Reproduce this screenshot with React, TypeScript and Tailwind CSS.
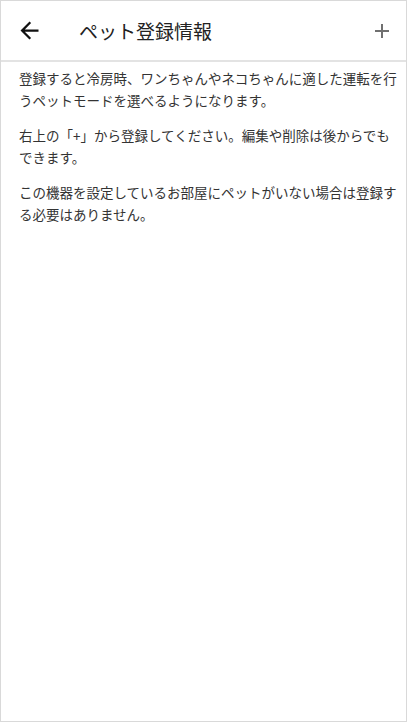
import React from "react";

export default function App() {
  const font = { fontFamily: '"Noto Sans CJK JP", "Noto Sans", sans-serif' };
  return (
    <div
      className="w-[407px] h-[722px] bg-white border border-[#d9d9d9] flex flex-col overflow-hidden"
      style={font}
    >
      <div className="h-[61px] shrink-0 flex items-center pl-[15px] pr-[12px] border-b-2 border-[#e3e3e3]">
        <svg width="27" height="27" viewBox="0 0 24 24" fill="#111111">
          <path d="M20 11H7.83l5.59-5.59L12 4l-8 8 8 8 1.41-1.41L7.83 13H20v-2z" />
        </svg>
        <div className="ml-[36px] text-[19px] text-[#222222] leading-none">ペット登録情報</div>
        <div className="flex-1" />
        <svg width="24" height="24" viewBox="0 0 24 24" fill="#707070">
          <path d="M19 13h-6v6h-2v-6H5v-2h6V5h2v6h6v2z" />
        </svg>
      </div>
      <div className="pl-[18px] pr-[10px] pt-[5px] text-[13.5px] leading-[22px] text-[#333333] flex flex-col gap-[13px] whitespace-nowrap">
        <p>
          登録すると冷房時、ワンちゃんやネコちゃんに適した運転を行
          <br />
          うペットモードを選べるようになります。
        </p>
        <p>
          右上の「+」から登録してください。編集や削除は後からでも
          <br />
          できます。
        </p>
        <p>
          この機器を設定しているお部屋にペットがいない場合は登録す
          <br />
          る必要はありません。
        </p>
      </div>
    </div>
  );
}
